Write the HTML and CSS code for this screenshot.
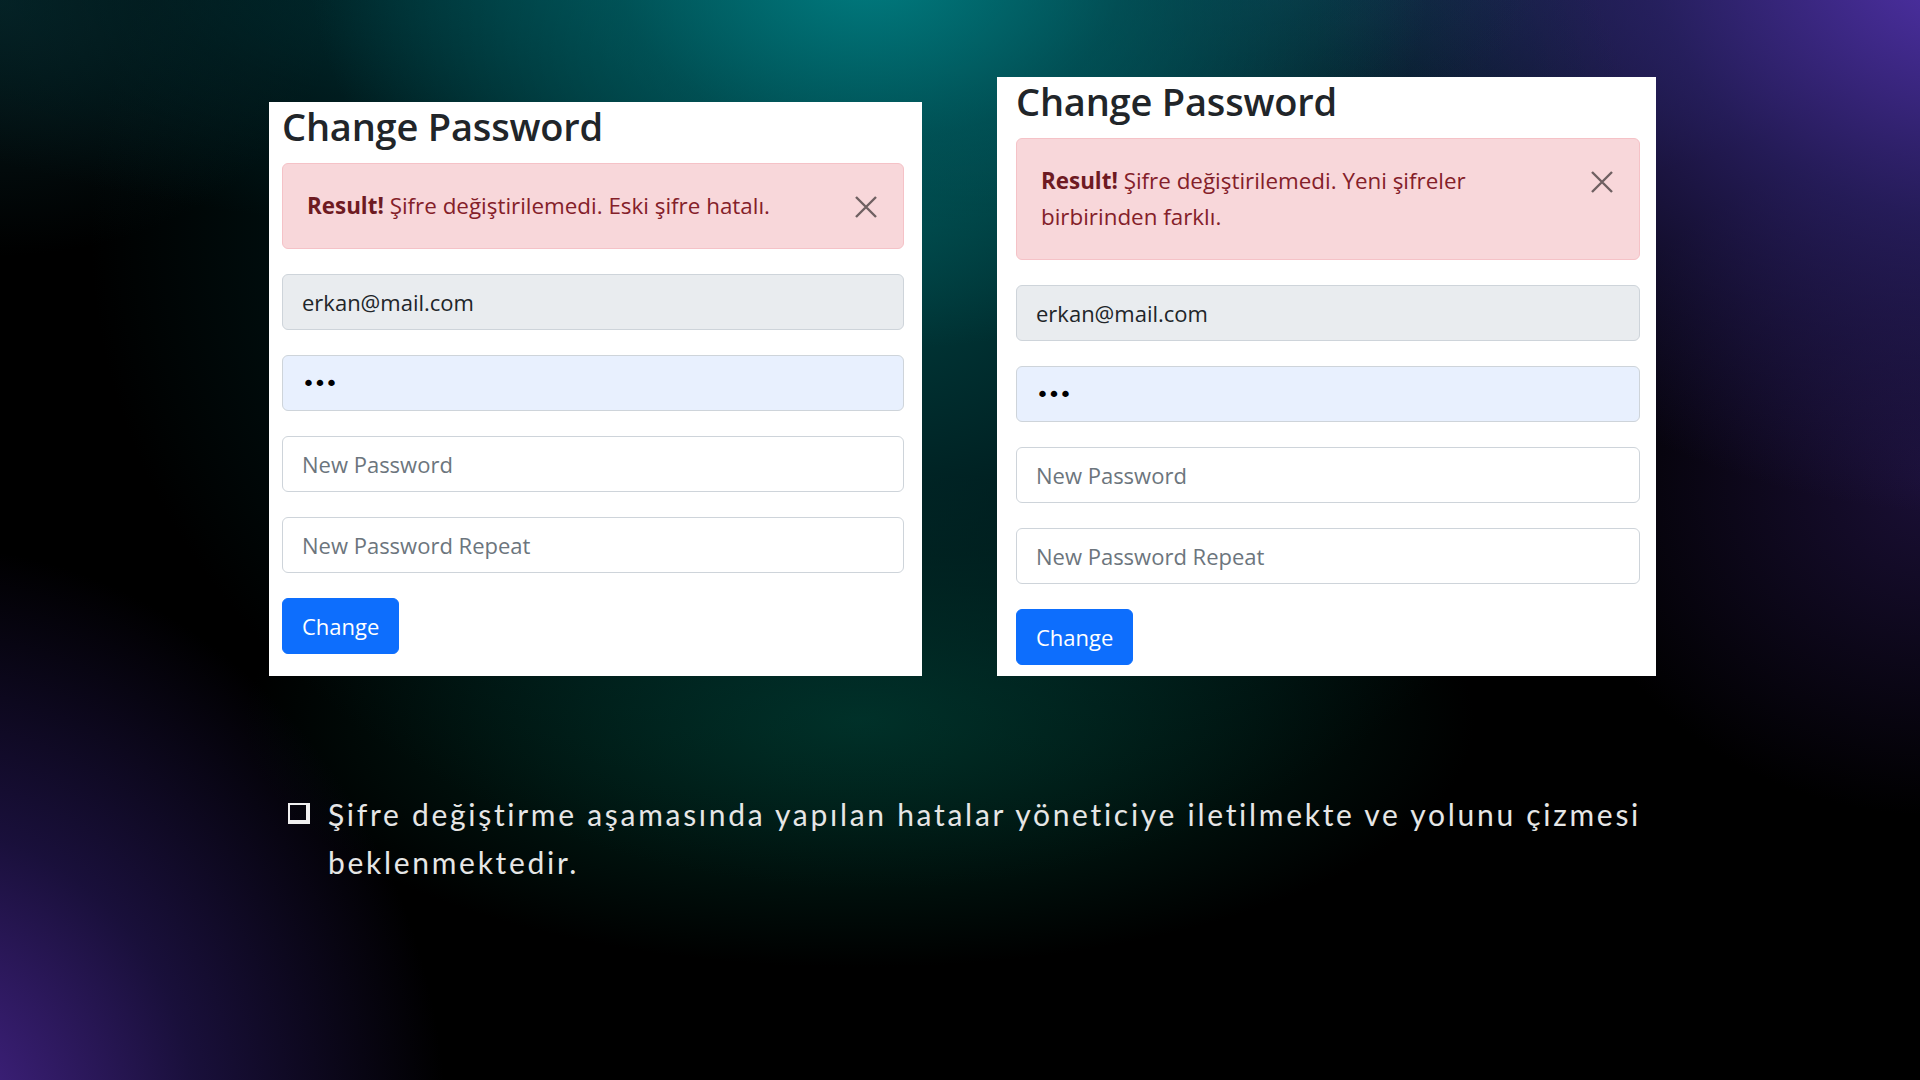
FILE: index.html
```html
<!DOCTYPE html>
<html lang="tr">
<head>
<meta charset="utf-8">
<title>Change Password</title>
<link rel="stylesheet" href="styles.css">
</head>
<body>
<div class="slide">
  <div class="cards">
    <section class="card card-left">
      <h2 class="title">Change Password</h2>
      <div class="alert">
        <strong>Result!</strong> Şifre değiştirilemedi. Eski şifre hatalı.
        <button class="close" type="button" aria-label="Close">
          <svg viewBox="0 0 24 24" width="24" height="24"><path d="M2 2 L22 22 M22 2 L2 22"/></svg>
        </button>
      </div>
      <form class="form">
        <input class="field field-readonly" value="erkan@mail.com" readonly>
        <input class="field field-autofill" type="password" value="abc">
        <input class="field" placeholder="New Password">
        <input class="field" placeholder="New Password Repeat">
        <button class="btn" type="button">Change</button>
      </form>
    </section>
    <section class="card card-right">
      <h2 class="title">Change Password</h2>
      <div class="alert">
        <strong>Result!</strong> Şifre değiştirilemedi. Yeni şifreler birbirinden farklı.
        <button class="close" type="button" aria-label="Close">
          <svg viewBox="0 0 24 24" width="24" height="24"><path d="M2 2 L22 22 M22 2 L2 22"/></svg>
        </button>
      </div>
      <form class="form">
        <input class="field field-readonly" value="erkan@mail.com" readonly>
        <input class="field field-autofill" type="password" value="abc">
        <input class="field" placeholder="New Password">
        <input class="field" placeholder="New Password Repeat">
        <button class="btn" type="button">Change</button>
      </form>
    </section>
  </div>
  <div class="note">
    <span class="bullet"></span>
    <p class="note-text">Şifre değiştirme aşamasında yapılan hatalar yöneticiye iletilmekte ve yolunu çizmesi beklenmektedir.</p>
  </div>
</div>
</body>
</html>
```
FILE: styles.css
```css
html, body {
  margin: 0;
  padding: 0;
}

body {
  width: 1920px;
  height: 1080px;
  overflow: hidden;
  background: #000;
}

.slide {
  width: 1920px;
  height: 1080px;
  box-sizing: border-box;
  background-color: #000;
  background-image:
    radial-gradient(ellipse 560px 380px at 870px -30px, rgba(0,128,132,0.95) 0%, rgba(0,100,104,0.6) 45%, rgba(0,70,75,0) 100%),
    radial-gradient(ellipse 900px 260px at 640px -20px, rgba(0,62,68,0.85) 0%, rgba(0,45,50,0.45) 55%, rgba(0,0,0,0) 100%),
    radial-gradient(ellipse 780px 660px at 870px 230px, rgba(0,80,82,0.8) 0%, rgba(0,52,54,0.5) 50%, rgba(0,0,0,0) 100%),
    radial-gradient(ellipse 820px 700px at 1980px -60px, rgba(86,52,180,1) 0%, rgba(48,36,115,0.75) 40%, rgba(20,15,50,0) 82%),
    radial-gradient(ellipse 700px 260px at 1250px -40px, rgba(25,60,95,0.9) 0%, rgba(20,45,80,0.5) 50%, rgba(0,0,0,0) 100%),
    radial-gradient(ellipse 620px 700px at -80px 1140px, rgba(74,38,145,1) 0%, rgba(42,26,98,0.6) 45%, rgba(0,0,0,0) 85%),
    radial-gradient(ellipse 820px 330px at 860px 720px, rgba(0,50,38,0.95) 0%, rgba(0,0,0,0) 75%),
    radial-gradient(ellipse 480px 420px at 1940px 480px, rgba(38,22,78,0.7) 0%, rgba(0,0,0,0) 80%),
    radial-gradient(ellipse 420px 320px at 0px 0px, rgba(8,40,44,0.75) 0%, rgba(0,0,0,0) 80%);
  font-family: "Open Sans", "Noto Sans", sans-serif;
}

.cards {
  display: flex;
  align-items: flex-end;
  gap: 75px;
  height: 676px;
  padding-left: 269px;
  box-sizing: border-box;
}

.card {
  background: #fff;
  box-sizing: border-box;
}

.card-left {
  width: 653px;
  height: 574px;
  padding: 0 18px 0 13px;
}

.card-right {
  width: 659px;
  height: 599px;
  padding: 0 16px 0 19px;
}

.title {
  margin: 0 0 12px 0;
  font-size: 38px;
  font-weight: 600;
  line-height: 49px;
  color: #212529;
  letter-spacing: -0.2px;
}

.alert {
  position: relative;
  box-sizing: border-box;
  padding: 24px 96px 24px 24px;
  border: 1px solid #f5c2c7;
  border-radius: 6px;
  background: #f8d7da;
  color: #842029;
  font-size: 22.4px;
  line-height: 36px;
}

.alert strong {
  font-weight: 700;
  color: #6e1a22;
}

.close {
  position: absolute;
  top: 31px;
  right: 25px;
  width: 24px;
  height: 24px;
  padding: 0;
  border: 0;
  background: transparent;
  opacity: 0.55;
}

.close svg {
  display: block;
}

.close path {
  stroke: #000;
  stroke-width: 2.4;
  fill: none;
}

.form {
  margin: 25px 0 0 0;
  display: flex;
  flex-direction: column;
  align-items: flex-start;
  gap: 25px;
}

.field {
  width: 100%;
  height: 56px;
  box-sizing: border-box;
  padding: 0 19px;
  border: 1px solid #ced4da;
  border-radius: 6px;
  background: #fff;
  color: #212529;
  font-family: "Open Sans", "Noto Sans", sans-serif;
  font-size: 22px;
  outline: none;
}

.field::placeholder {
  color: #6c757d;
  opacity: 1;
}

.field-readonly {
  background: #e9ecef;
}

.field-autofill {
  background: #e8f0fe;
  font-family: "DejaVu Sans", sans-serif;
  font-size: 22px;
  letter-spacing: -1.5px;
  color: #000;
}

.btn {
  height: 56px;
  box-sizing: border-box;
  padding: 0 19px;
  border: 1px solid #0d6efd;
  border-radius: 6px;
  background: #0d6efd;
  color: #fff;
  font-family: "Open Sans", "Noto Sans", sans-serif;
  font-size: 22px;
  cursor: pointer;
}

.note {
  display: flex;
  align-items: flex-start;
  margin-top: 114px;
  padding-left: 288px;
  width: 1641px;
  box-sizing: border-box;
}

.bullet {
  flex: none;
  width: 22px;
  height: 21px;
  margin-top: 13px;
  margin-right: 18px;
  box-sizing: border-box;
  border: 2px solid #f0f0f0;
  border-right-width: 4px;
  border-bottom-width: 4px;
}

.note-text {
  margin: 0;
  flex: 1;
  font-family: "Lato", "Open Sans", sans-serif;
  font-size: 30px;
  line-height: 48px;
  letter-spacing: 2.7px;
  color: #e6e6e6;
  text-align: justify;
}
```
